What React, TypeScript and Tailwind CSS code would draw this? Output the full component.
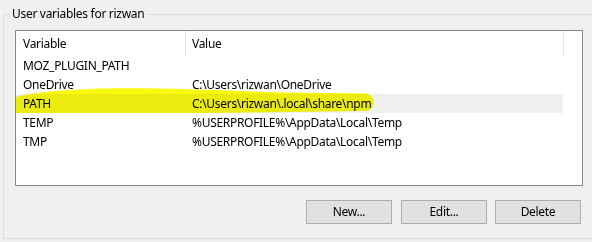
import React from 'react';

const rows = [
  { name: 'MOZ_PLUGIN_PATH', value: '' },
  { name: 'OneDrive', value: 'C:\\Users\\rizwan\\OneDrive' },
  { name: 'PATH', value: 'C:\\Users\\rizwan\\.local\\share\\npm', selected: true },
  { name: 'TEMP', value: '%USERPROFILE%\\AppData\\Local\\Temp' },
  { name: 'TMP', value: '%USERPROFILE%\\AppData\\Local\\Temp' },
];

function WinButton({ label, className = '' }: { label: string; className?: string }) {
  return (
    <button
      className={`w-[86px] h-[24px] bg-[#e1e1e1] border border-[#adadad] text-black text-[12px] leading-none ${className}`}
    >
      {label}
    </button>
  );
}

export default function App() {
  return (
    <div
      className="w-[592px] h-[242px] bg-[#f0f0f0] overflow-hidden text-black text-[12px] tracking-[-0.3px]"
      style={{ fontFamily: '"Noto Sans", "Segoe UI", sans-serif' }}
    >
      <fieldset className="ml-[3px] mt-[6px] w-[600px] h-[233px] border border-[#dcdcdc] pl-[11px] pt-[8px]">
        <legend className="ml-[-5px] px-[2px] leading-[16px]">User variables for rizwan</legend>

        {/* list view */}
        <div className="relative w-[568px] h-[156px] border border-[#828790] bg-white">
          <div className="flex h-[25px] items-center">
            <div className="w-[170px] h-full pl-[7px] flex items-center border-r border-[#e5e5e5]">Variable</div>
            <div className="w-[378px] h-full pl-[6px] flex items-center border-r border-[#e5e5e5]">Value</div>
          </div>
          {rows.map((r) => (
            <div
              key={r.name}
              className={`flex h-[19px] w-[547px] items-center ${r.selected ? 'bg-[#f0f0f0]' : ''}`}
            >
              <div className="w-[170px] pl-[7px]">{r.name}</div>
              <div className="pl-[6px] whitespace-nowrap">{r.value}</div>
            </div>
          ))}

          {/* yellow marker scribble over the PATH row */}
          <svg
            className="absolute left-0 top-0 pointer-events-none mix-blend-multiply"
            width="566"
            height="154"
            viewBox="16 31 566 154"
          >
            <path
              d="M16 97 C30 93 60 90 100 88.5 C140 87.5 200 89 250 91.5 C300 93 340 93 366 93.5 C376 95 376 109 367 111 C330 111.5 260 112.5 200 113 C140 113 80 113 16 113 Z"
              fill="#fafa10"
            />
          </svg>
        </div>

        <div className="flex w-[568px] mt-[14px]">
          <WinButton label="New..." className="ml-[291px]" />
          <WinButton label="Edit..." className="ml-[9px]" />
          <WinButton label="Delete" className="ml-[8px]" />
        </div>
      </fieldset>
    </div>
  );
}
